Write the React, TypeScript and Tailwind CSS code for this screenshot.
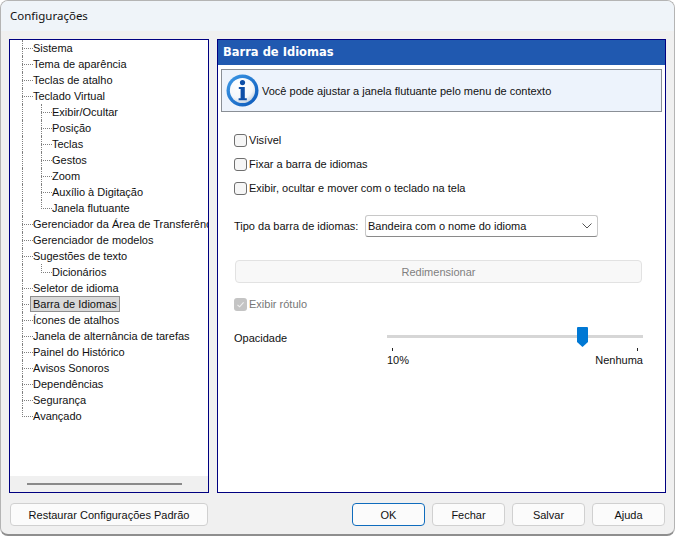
const tree: { label: string; level: number; last?: boolean; selected?: boolean }[] = [
  { label: 'Sistema', level: 0 },
  { label: 'Tema de aparência', level: 0 },
  { label: 'Teclas de atalho', level: 0 },
  { label: 'Teclado Virtual', level: 0 },
  { label: 'Exibir/Ocultar', level: 1 },
  { label: 'Posição', level: 1 },
  { label: 'Teclas', level: 1 },
  { label: 'Gestos', level: 1 },
  { label: 'Zoom', level: 1 },
  { label: 'Auxílio à Digitação', level: 1 },
  { label: 'Janela flutuante', level: 1, last: true },
  { label: 'Gerenciador da Área de Transferência', level: 0 },
  { label: 'Gerenciador de modelos', level: 0 },
  { label: 'Sugestões de texto', level: 0 },
  { label: 'Dicionários', level: 1, last: true },
  { label: 'Seletor de idioma', level: 0 },
  { label: 'Barra de Idiomas', level: 0, selected: true },
  { label: 'Ícones de atalhos', level: 0 },
  { label: 'Janela de alternância de tarefas', level: 0 },
  { label: 'Painel do Histórico', level: 0 },
  { label: 'Avisos Sonoros', level: 0 },
  { label: 'Dependências', level: 0 },
  { label: 'Segurança', level: 0 },
  { label: 'Avançado', level: 0, last: true },
]

function Guide({ last }: { last?: boolean }) {
  return (
    <div className="relative h-4 w-[11px] shrink-0">
      <div className={`absolute left-0 top-0 border-l border-dotted border-[#808080] ${last ? 'h-[9px]' : 'h-4'}`} />
      <div className="absolute left-0 top-[8px] w-[11px] border-t border-dotted border-[#808080]" />
    </div>
  )
}

function TreeRow({ label, level, last, selected }: { label: string; level: number; last?: boolean; selected?: boolean }) {
  return (
    <div className="flex h-4 items-center pl-[12px] whitespace-nowrap">
      {level === 1 && <div className="h-4 w-[19px] shrink-0 border-l border-dotted border-[#808080]" />}
      <Guide last={last} />
      <span
        className={`relative -ml-[3px] flex h-4 items-center ${
          selected ? 'border border-[#8f8f8f] bg-[#d9d9d9] px-[2px]' : 'px-[3px]'
        }`}
      >
        {label}
      </span>
    </div>
  )
}

function Check({ label, disabled, y }: { label: string; disabled?: boolean; y: string }) {
  return (
    <div className={`flex items-center ${y}`}>
      {disabled ? (
        <div className="flex h-[13px] w-[13px] items-center justify-center rounded-[3px] bg-[#c4c4c4]">
          <svg width="9" height="9" viewBox="0 0 9 9" fill="none">
            <path d="M1.5 4.8 3.6 6.8 7.6 2.4" stroke="#f0f0f0" strokeWidth="1.1" />
          </svg>
        </div>
      ) : (
        <div className="h-[13px] w-[13px] rounded-[3px] border border-[#6f6f6f] bg-[#f6f6f6]" />
      )}
      <span className={`ml-[2px] ${disabled ? 'text-[#767676]' : ''}`}>{label}</span>
    </div>
  )
}

function InfoIcon() {
  return (
    <svg width="33" height="33" viewBox="0 0 33 33" className="shrink-0">
      <defs>
        <linearGradient id="ring" x1="0" y1="0" x2="1" y2="1">
          <stop offset="0" stopColor="#3f9be8" />
          <stop offset="1" stopColor="#0a56b8" />
        </linearGradient>
        <radialGradient id="face" cx="0.4" cy="0.3" r="0.8">
          <stop offset="0" stopColor="#ffffff" />
          <stop offset="0.65" stopColor="#f4f7fb" />
          <stop offset="1" stopColor="#b4c6da" />
        </radialGradient>
      </defs>
      <circle cx="16.5" cy="16.5" r="16" fill="url(#ring)" />
      <circle cx="16.5" cy="16.5" r="12.6" fill="url(#face)" />
      <circle cx="16.5" cy="8.6" r="2.6" fill="#0d4fa8" />
      <path d="M12.8 13h6v11.2h2v2.1h-8.2v-2.1h2v-9.1h-1.8z" fill="#0d4fa8" />
    </svg>
  )
}

function Button({ children, primary, className }: { children: string; primary?: boolean; className: string }) {
  return (
    <div
      className={`flex h-[23px] items-center justify-center rounded-[4px] border bg-[#fbfbfb] ${
        primary ? 'border-[#0f6cbd]' : 'border-[#d0d0d0]'
      } ${className}`}
    >
      {children}
    </div>
  )
}

export default function App() {
  return (
    <div className="flex h-[536px] w-[675px] flex-col overflow-hidden rounded-[8px] border border-b-2 border-[#b4b4b4] border-b-[#8e8e8e] bg-[#f0f0f0] font-['Liberation_Sans',sans-serif] text-[11px] leading-4 text-[#111111]">
      <div className="flex h-[30px] shrink-0 items-center bg-[#eff4f9] pl-[9px] font-['Noto_Sans',sans-serif] text-[11.5px]">Configurações</div>
      <div className="flex h-[462px] shrink-0 gap-2 pl-[8px] pt-[8px]">
        <div className="flex h-[454px] w-[200px] shrink-0 flex-col border border-[#000080] bg-white">
          <div className="flex-1 overflow-hidden">
            {tree.map((t) => (
              <TreeRow key={t.label} {...t} />
            ))}
          </div>
          <div className="flex h-4 shrink-0 items-center bg-[#f0f0f0] pl-[17px]">
            <div className="h-[2px] w-[155px] bg-[#8a8a8a]" />
          </div>
        </div>
        <div className="flex h-[454px] w-[449px] shrink-0 flex-col border border-[#000080] bg-white">
          <div className="flex h-[25px] shrink-0 items-center bg-[#2059b0] pb-px pl-[5px] font-['DejaVu_Sans',sans-serif] text-[11.5px] font-bold text-white">
            Barra de Idiomas
          </div>
          <div className="mx-[3px] mt-[4px] flex h-[43px] items-center gap-[3px] border border-[#8a8f96] bg-[#edf3fc] pl-[4px]">
            <InfoIcon />
            <span>Você pode ajustar a janela flutuante pelo menu de contexto</span>
          </div>
          <div className="flex flex-col pl-[16px] pr-[23px]">
            <Check label="Visível" y="mt-[20px] h-4" />
            <Check label="Fixar a barra de idiomas" y="mt-2 h-4" />
            <Check label="Exibir, ocultar e mover com o teclado na tela" y="mt-2 h-4" />
            <div className="mt-[19px] flex h-[22px] items-center">
              <span className="w-[131px] shrink-0 whitespace-nowrap">Tipo da barra de idiomas:</span>
              <div className="flex h-[22px] w-[233px] items-center justify-between rounded-[3px] border border-[#c8c8c8] border-b-[#8a8a8a] bg-white pl-[2px] pr-[5px]">
                <span>Bandeira com o nome do idioma</span>
                <svg width="10" height="6" viewBox="0 0 10 6" fill="none">
                  <path d="M.5.5 5 5 9.5.5" stroke="#555555" />
                </svg>
              </div>
            </div>
            <div className="mt-[23px] ml-[1px] flex h-[23px] w-[407px] items-center justify-center rounded-[4px] border border-[#e2e2e2] bg-[#f8f8f8] text-[#7f7f7f]">
              Redimensionar
            </div>
            <Check label="Exibir rótulo" disabled y="mt-[13px] h-4" />
            <div className="mt-[15px] flex">
              <span className="mt-[3px] w-[153px] shrink-0">Opacidade</span>
              <div className="w-[256px] shrink-0">
                <div className="relative h-[20px]">
                  <div className="absolute left-0 right-0 top-[8px] h-[3px] bg-[#d6d6d6]" />
                  <svg width="11" height="20" viewBox="0 0 11 20" className="absolute left-[190px] top-0">
                    <path d="M0 1a1 1 0 0 1 1-1h9a1 1 0 0 1 1 1v14l-5.5 5L0 15z" fill="#0078d4" />
                  </svg>
                </div>
                <div className="flex justify-between px-[5px] pt-[1px]">
                  <div className="h-[3px] w-px bg-[#222222]" />
                  <div className="h-[3px] w-px bg-[#222222]" />
                </div>
                <div className="mt-[1px] flex justify-between">
                  <span>10%</span>
                  <span>Nenhuma</span>
                </div>
              </div>
            </div>
          </div>
        </div>
      </div>
      <div className="flex flex-1 items-start pl-[9px] pt-[10px]">
        <Button className="w-[198px]">Restaurar Configurações Padrão</Button>
        <div className="ml-[144px] flex gap-[7px]">
          <Button primary className="w-[73px]">OK</Button>
          <Button className="w-[73px]">Fechar</Button>
          <Button className="w-[73px]">Salvar</Button>
          <Button className="w-[73px]">Ajuda</Button>
        </div>
      </div>
    </div>
  )
}
